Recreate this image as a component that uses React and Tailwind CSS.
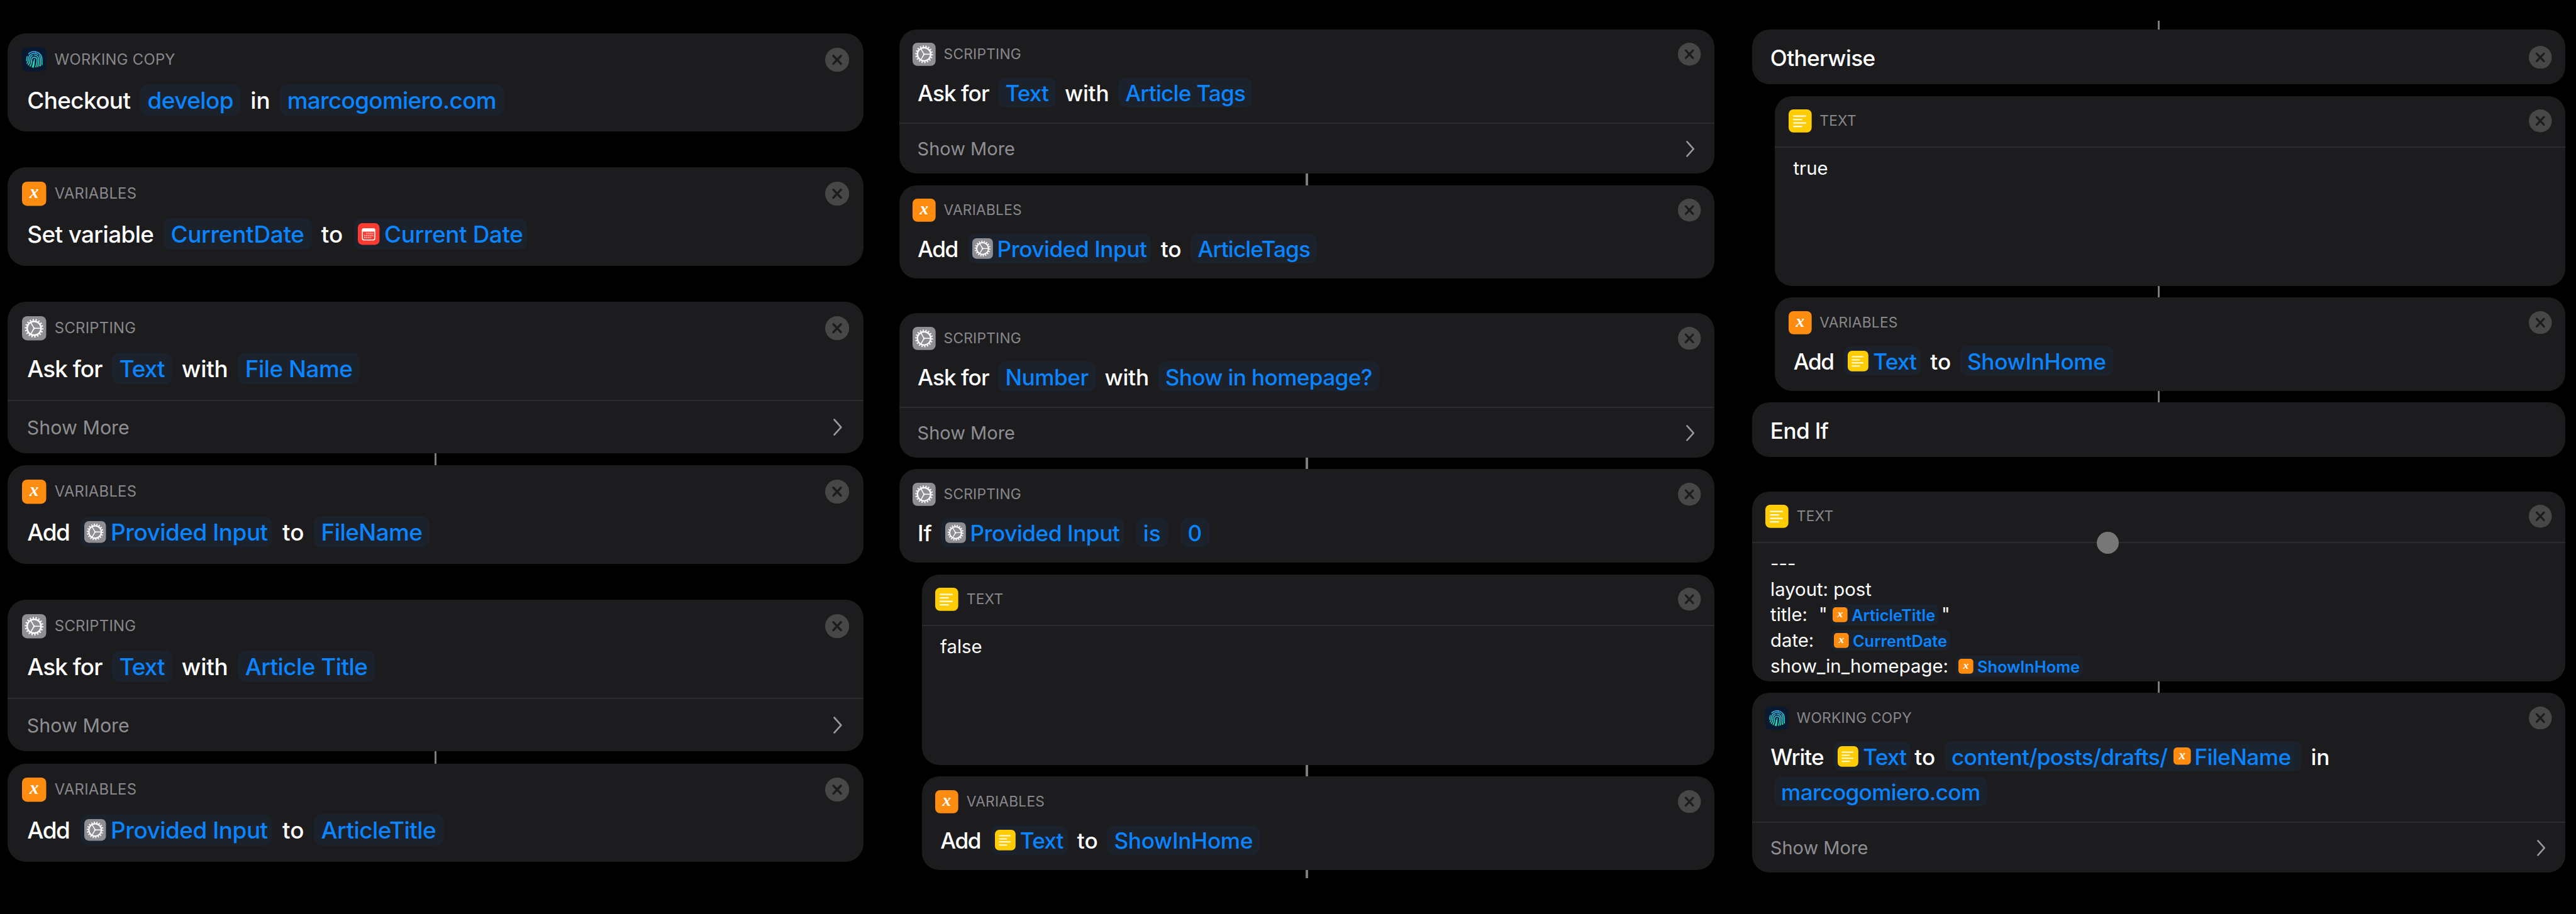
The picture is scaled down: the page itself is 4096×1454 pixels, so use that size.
import React from "react";

/* ---------- icons ---------- */

function Tile({ className, children }) {
  return (
    <svg viewBox="0 0 24 24" className={`block shrink-0 overflow-visible ${className}`} fill="none">
      {children}
    </svg>
  );
}

function GearIcon({ className }) {
  return (
    <Tile className={className}>
      <rect width="24" height="24" rx="5" fill="#8e8e93" />
      <g stroke="#fff">
        <circle cx="12" cy="12" r="6.9" strokeWidth="1.5" />
        <circle cx="12" cy="12" r="8.4" strokeWidth="1.7" pathLength="18" strokeDasharray="0.42 0.58" />
        <path d="M12 12h6.6M12 12l-3.4-5.9M12 12l-3.4 5.9" strokeWidth="1" />
      </g>
      <circle cx="12" cy="12" r="0.9" fill="#fff" />
    </Tile>
  );
}

function VariableIcon({ className }) {
  return (
    <Tile className={className}>
      <rect width="24" height="24" rx="5" fill="#fe8c10" />
      <text
        x="12"
        y="16.3"
        textAnchor="middle"
        fill="#fff"
        className="font-['Liberation_Serif',serif] text-[18px] font-bold italic"
      >
        x
      </text>
    </Tile>
  );
}

function TextIcon({ className }) {
  return (
    <Tile className={className}>
      <rect width="24" height="24" rx="5" fill="#fecc02" />
      <path
        d="M4.8 6.9h13.4M4.8 10.6h9.4M4.8 14.1h13.4M4.8 17.7h9.4"
        stroke="#fffbe8"
        strokeWidth="1.5"
      />
    </Tile>
  );
}

function CalendarIcon({ className }) {
  return (
    <Tile className={className}>
      <rect width="24" height="24" rx="5" fill="#fe3b30" />
      <rect x="5" y="6.3" width="13.8" height="12.3" rx="1.8" stroke="#fff" strokeWidth="1.1" />
      <path d="M4.5 9.4V7.9a2.1 2.1 0 0 1 2.1-2.1h10.6a2.1 2.1 0 0 1 2.1 2.1v1.5z" fill="#fff" />
      <path
        d="M9.4 11.4h7.6M7 13.7h10M7 16h7.8"
        stroke="#ffb9b4"
        strokeWidth="1.4"
        strokeDasharray="1.4 0.8"
      />
    </Tile>
  );
}

function FingerprintIcon({ className }) {
  return (
    <Tile className={className}>
      <defs>
        <linearGradient id="print" x1="12" y1="4" x2="12" y2="20" gradientUnits="userSpaceOnUse">
          <stop offset="0" stopColor="#3aaeea" />
          <stop offset="1" stopColor="#1fe3b4" />
        </linearGradient>
      </defs>
      <rect width="24" height="24" rx="5" fill="#091a30" />
      <g stroke="url(#print)" strokeWidth="1" strokeLinecap="round">
        <path d="M6.6 6.6a8 8 0 0 1 6.6-2.1M15.2 5a8 8 0 0 1 4.600 7.200v5.200" />
        <path d="M4.600 13.600c.1-1.600 0-3 .6-4.400M5 16c1.300-1.700 1.200-3 1.300-4.200a6 6 0 0 1 9.400-4.600M17 8.200a6 6 0 0 1 1.200 3.800c0 2.200 0 3.800-.3 6.200" />
        <path d="M6.200 17.600c1.500-1.800 1.700-3.600 1.700-5.400a4.300 4.300 0 0 1 2.500-3.900M12 7.800a4.400 4.400 0 0 1 4.500 4.400c0 2.600-.2 4.700-.9 7.100" />
        <path d="M8 18.900c1.300-2 1.600-4.200 1.600-6.500a2.700 2.700 0 0 1 5.300-.3c.1 2.900-.3 5-1.200 7.600" />
        <path d="M10.200 19.700c.9-2 1.300-3.800 1.300-5.600M12.200 12v1.400c0 2.200-.2 4.200-.9 6.600" />
      </g>
      <circle cx="17.9" cy="18.2" r="0.8" fill="#1fe3b4" />
      <circle cx="13.9" cy="4.800" r="0.8" fill="#3aaeea" />
    </Tile>
  );
}

function CloseIcon() {
  return (
    <svg viewBox="0 0 24 24" className="block size-[calc(var(--u)*17.1)] shrink-0">
      <circle cx="12" cy="12" r="12" fill="#474748" />
      <path d="M8.2 8l7.6 8M15.8 8l-7.6 8" stroke="#1c1c1e" strokeWidth="2.1" strokeLinecap="round" />
    </svg>
  );
}

function Chevron() {
  return (
    <svg viewBox="0 0 14 27" className="block h-[calc(var(--u)*12.1)] w-[calc(var(--u)*6.3)]" fill="none">
      <path d="M1.5 1.5L12.3 13.5L1.5 25.5" stroke="#98989d" strokeWidth="2.7" strokeLinecap="round" strokeLinejoin="round" />
    </svg>
  );
}

const ICONS = {
  gear: GearIcon,
  variable: VariableIcon,
  text: TextIcon,
  calendar: CalendarIcon,
  print: FingerprintIcon,
};

/* ---------- text pieces ---------- */

const TRACKING = {
  Checkout: "tracking-[-0.017em]",
  develop: "tracking-[-0.014em]",
  "marcogomiero.com": "tracking-[-0.019em]",
  "Set variable": "tracking-[-0.017em]",
  CurrentDate: "tracking-[-0.008em]",
  "Current Date": "tracking-[-0.011em]",
  "Ask for": "tracking-[-0.026em]",
  Text: "tracking-[-0.025em]",
  with: "tracking-[-0.006em]",
  "File Name": "tracking-[-0.013em]",
  "Article Title": "tracking-[-0.015em]",
  Add: "tracking-[-0.040em]",
  "Provided Input": "tracking-[-0.013em]",
  FileName: "tracking-[-0.015em]",
  ArticleTitle: "tracking-[-0.015em]",
  "Article Tags": "tracking-[-0.022em]",
  ArticleTags: "tracking-[-0.024em]",
  Number: "tracking-[-0.013em]",
  "Show in homepage?": "tracking-[-0.018em]",
  ShowInHome: "tracking-[-0.009em]",
  Otherwise: "tracking-[-0.018em]",
  "End If": "tracking-[-0.019em]",
  Write: "tracking-[-0.028em]",
  "content/posts/drafts/": "tracking-[-0.019em]",
};

function Word({ children }) {
  return (
    <span
      className={`whitespace-pre pt-[calc(var(--u)*1.2)] text-[length:calc(var(--u)*16.5)] leading-none font-medium ${TRACKING[children] ?? ""}`}
    >
      {children}
    </span>
  );
}

function Pill({ children }) {
  return (
    <span className="flex h-[calc(var(--u)*22.3)] items-center rounded-[calc(var(--u)*5.5)] bg-[#1c222b] px-[calc(var(--u)*5.3)] text-[#0a84ff]">
      <Word>{children}</Word>
    </span>
  );
}

function IconPill({ icon, children, className = "mr-[calc(var(--u)*0.6)] ml-[calc(var(--u)*1)]" }) {
  const Icon = ICONS[icon];
  return (
    <span
      className={`flex h-[calc(var(--u)*21.8)] items-center gap-[calc(var(--u)*3.3)] rounded-[calc(var(--u)*5)] bg-[#1c222b] pr-[calc(var(--u)*3)] pl-[calc(var(--u)*2.9)] text-[#0a84ff] ${className}`}
    >
      <Icon className="size-[calc(var(--u)*15.4)]" />
      <Word>{children}</Word>
    </span>
  );
}

function Sentence({ children, className = "" }) {
  return (
    <div className={`flex h-[calc(var(--u)*22.3)] items-center gap-[calc(var(--u)*6.8)] ${className}`}>
      {children}
    </div>
  );
}

/* ---------- cards ---------- */

function Shell({ children, className = "" }) {
  return (
    <section className={`flex flex-col rounded-[calc(var(--u)*13)] bg-[#1c1c1e] ${className}`}>
      {children}
    </section>
  );
}

function Header({ icon, label }) {
  const Icon = ICONS[icon];
  return (
    <header className="flex items-center px-[calc(var(--u)*10)] pt-[calc(var(--u)*10.1)]">
      <Icon className="size-[calc(var(--u)*17.2)]" />
      <span className="ml-[calc(var(--u)*6.1)] grow text-[length:calc(var(--u)*10.65)] leading-none tracking-[0.011em] text-[#88888c]">
        {label}
      </span>
      <CloseIcon />
    </header>
  );
}

function Action({ icon, label, children, more, className = "" }) {
  return (
    <Shell className={className}>
      <Header icon={icon} label={label} />
      <div className="flex flex-col gap-[calc(var(--u)*4.1)] pt-[calc(var(--u)*8.9)] pr-[calc(var(--u)*14)] pb-[calc(var(--u)*11.3)] pl-[calc(var(--u)*13.8)]">
        {children}
      </div>
      {more && (
        <div className="flex h-[calc(var(--u)*38)] items-center justify-between border-t-2 border-[#2b2b2d] pr-[calc(var(--u)*15)] pl-[calc(var(--u)*13.6)]">
          <span className="text-[length:calc(var(--u)*13.6)] leading-none text-[#8e8e93]">Show More</span>
          <Chevron />
        </div>
      )}
    </Shell>
  );
}

function TextCard({ children, className = "h-[calc(var(--u)*141.8)]" }) {
  return (
    <Shell className={className}>
      <Header icon="text" label="TEXT" />
      <div className="mt-[calc(var(--u)*10.2)] flex flex-col border-t-2 border-[#2b2b2d] px-[calc(var(--u)*13.7)] pt-[calc(var(--u)*5.9)] text-[length:calc(var(--u)*13.75)]">
        {children}
      </div>
    </Shell>
  );
}

function Line({ children }) {
  return <div className="flex h-[calc(var(--u)*19.1)] items-center whitespace-pre leading-none">{children}</div>;
}

function Chip({ children, className = "" }) {
  return (
    <span
      className={`flex h-[calc(var(--u)*15.6)] items-center gap-[calc(var(--u)*2.9)] rounded-[calc(var(--u)*3.5)] bg-[#1c222b] pr-[calc(var(--u)*2.3)] pl-[calc(var(--u)*1.7)] text-[length:calc(var(--u)*11.9)] font-semibold text-[#0a84ff] ${className}`}
    >
      <VariableIcon className="size-[calc(var(--u)*11.1)]" />
      <span className="pt-[calc(var(--u)*1)] leading-none">{children}</span>
    </span>
  );
}

function Bare({ children, closable }) {
  return (
    <Shell className="h-[calc(var(--u)*40.8)] justify-center">
      <div className="flex items-center justify-between pr-[calc(var(--u)*10)] pl-[calc(var(--u)*13.6)]">
        <Word>{children}</Word>
        {closable && <CloseIcon />}
      </div>
    </Shell>
  );
}

function Link({ className = "h-[calc(var(--u)*8.6)]", hidden }) {
  return <div className={`w-[calc(var(--u)*1.5)] self-center ${hidden ? "" : "bg-[#7b7b80]"} ${className}`} />;
}

function Gap({ className = "h-[calc(var(--u)*25.7)]" }) {
  return <div className={className} />;
}

/* ---------- page ---------- */

export default function App() {
  return (
    <main className="flex h-[1454px] w-[4096px] items-start overflow-hidden bg-black pl-[12.4px] font-['Inter',sans-serif] text-white">
      <div className="flex w-[1360.4px] shrink-0 flex-col pt-[52.8px] [--u:2.2374px]">
        <Action icon="print" label="WORKING COPY">
          <Sentence>
            <Word>Checkout</Word>
            <Pill>develop</Pill>
            <Word>in</Word>
            <Pill>marcogomiero.com</Pill>
          </Sentence>
        </Action>
        <Gap />
        <Action icon="variable" label="VARIABLES">
          <Sentence>
            <Word>Set variable</Word>
            <Pill>CurrentDate</Pill>
            <Word>to</Word>
            <IconPill icon="calendar">Current Date</IconPill>
          </Sentence>
        </Action>
        <Gap />
        <Action icon="gear" label="SCRIPTING" more>
          <Sentence>
            <Word>Ask for</Word>
            <Pill>Text</Pill>
            <Word>with</Word>
            <Pill>File Name</Pill>
          </Sentence>
        </Action>
        <Link />
        <Action icon="variable" label="VARIABLES">
          <Sentence>
            <Word>Add</Word>
            <IconPill icon="gear">Provided Input</IconPill>
            <Word>to</Word>
            <Pill>FileName</Pill>
          </Sentence>
        </Action>
        <Gap />
        <Action icon="gear" label="SCRIPTING" more>
          <Sentence>
            <Word>Ask for</Word>
            <Pill>Text</Pill>
            <Word>with</Word>
            <Pill>Article Title</Pill>
          </Sentence>
        </Action>
        <Link />
        <Action icon="variable" label="VARIABLES">
          <Sentence>
            <Word>Add</Word>
            <IconPill icon="gear">Provided Input</IconPill>
            <Word>to</Word>
            <Pill>ArticleTitle</Pill>
          </Sentence>
        </Action>
      </div>

      <div className="ml-[56.8px] flex w-[1296.7px] shrink-0 flex-col pt-[46.5px] [--u:2.1327px]">
        <Action icon="gear" label="SCRIPTING" more>
          <Sentence>
            <Word>Ask for</Word>
            <Pill>Text</Pill>
            <Word>with</Word>
            <Pill>Article Tags</Pill>
          </Sentence>
        </Action>
        <Link />
        <Action icon="variable" label="VARIABLES">
          <Sentence>
            <Word>Add</Word>
            <IconPill icon="gear">Provided Input</IconPill>
            <Word>to</Word>
            <Pill>ArticleTags</Pill>
          </Sentence>
        </Action>
        <Gap />
        <Action icon="gear" label="SCRIPTING" more>
          <Sentence>
            <Word>Ask for</Word>
            <Pill>Number</Pill>
            <Word>with</Word>
            <Pill>Show in homepage?</Pill>
          </Sentence>
        </Action>
        <Link />
        <Action icon="gear" label="SCRIPTING">
          <Sentence>
            <Word>If</Word>
            <IconPill icon="gear" className="mr-[calc(var(--u)*2.5)]">
              Provided Input
            </IconPill>
            <span className="flex gap-[calc(var(--u)*9.5)]">
              <Pill>is</Pill>
              <Pill>0</Pill>
            </span>
          </Sentence>
        </Action>
        <Link hidden />
        <TextCard className="ml-[calc(var(--u)*17)] h-[calc(var(--u)*142.3)]">
          <Line>false</Line>
        </TextCard>
        <Link />
        <Action icon="variable" label="VARIABLES" className="ml-[calc(var(--u)*17)]">
          <Sentence>
            <Word>Add</Word>
            <IconPill icon="text">Text</IconPill>
            <Word>to</Word>
            <Pill>ShowInHome</Pill>
          </Sentence>
        </Action>
        <Link className="h-[calc(var(--u)*6.2)]" />
      </div>

      <div className="ml-[59.6px] flex w-[1293.1px] shrink-0 flex-col pt-[32.7px] [--u:2.1327px]">
        <Link className="h-[calc(var(--u)*6.9)]" />
        <Bare closable>Otherwise</Bare>
        <Link hidden />
        <TextCard className="ml-[calc(var(--u)*17.1)] h-[calc(var(--u)*141.7)]">
          <Line>true</Line>
        </TextCard>
        <Link />
        <Action icon="variable" label="VARIABLES" className="ml-[calc(var(--u)*17.1)]">
          <Sentence>
            <Word>Add</Word>
            <IconPill icon="text">Text</IconPill>
            <Word>to</Word>
            <Pill>ShowInHome</Pill>
          </Sentence>
        </Action>
        <Link />
        <Bare>End If</Bare>
        <Gap className="h-[calc(var(--u)*25.4)]" />
        <div className="relative flex flex-col">
          <TextCard>
            <Line>---</Line>
            <Line>layout: post</Line>
            <Line>
              title:<span className="ml-[calc(var(--u)*8.5)]">"</span>
              <Chip className="mx-[calc(var(--u)*2.3)]">ArticleTitle</Chip>"
            </Line>
            <Line>
              date:<Chip className="ml-[calc(var(--u)*13.2)]">CurrentDate</Chip>
            </Line>
            <Line>
              show_in_homepage:<Chip className="ml-[calc(var(--u)*5.9)]">ShowInHome</Chip>
            </Line>
          </TextCard>
          <span className="absolute top-[calc(var(--u)*30.4)] left-[calc(var(--u)*257.2)] size-[calc(var(--u)*16.3)] rounded-full bg-[#777777]" />
        </div>
        <Link />
        <Action icon="print" label="WORKING COPY" more>
          <Sentence>
            <Word>Write</Word>
            <span className="flex items-center gap-[calc(var(--u)*2.6)]">
              <IconPill icon="text">Text</IconPill>
              <Word>to</Word>
            </span>
            <span className="flex h-[calc(var(--u)*22.3)] items-center gap-[calc(var(--u)*2.1)] rounded-[calc(var(--u)*5.5)] bg-[#1c222b] pr-[calc(var(--u)*5.1)] pl-[calc(var(--u)*5.3)] text-[#0a84ff]">
              <Word>content/posts/drafts/</Word>
              <span className="flex h-[calc(var(--u)*18.5)] items-center gap-[calc(var(--u)*2.8)] rounded-[calc(var(--u)*4)] bg-[#1b2531] pr-[calc(var(--u)*3)] pl-[calc(var(--u)*2.3)]">
                <VariableIcon className="size-[calc(var(--u)*12.9)]" />
                <Word>FileName</Word>
              </span>
            </span>
            <Word>in</Word>
          </Sentence>
          <Sentence className="ml-[calc(var(--u)*2.6)]">
            <Pill>marcogomiero.com</Pill>
          </Sentence>
        </Action>
      </div>
    </main>
  );
}
